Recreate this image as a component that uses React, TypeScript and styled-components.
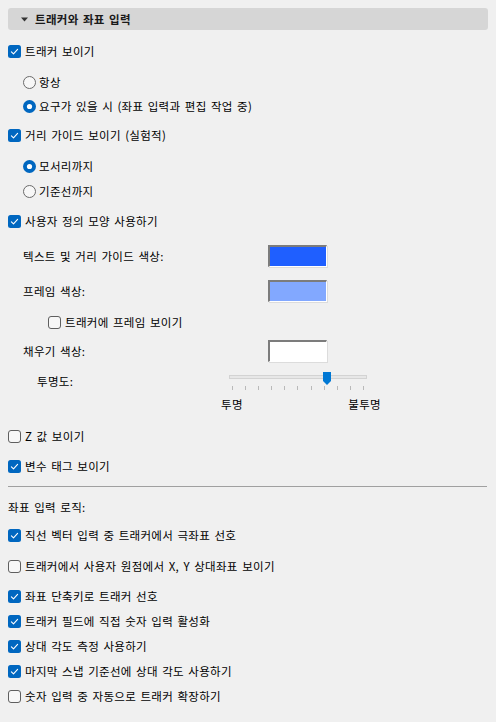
import styled, { createGlobalStyle } from "styled-components";

const GlobalStyle = createGlobalStyle`
  html, body {
    margin: 0;
    padding: 0;
    background: #f0f0f0;
  }
  body {
    font-family: "Noto Sans CJK KR", "Noto Sans", sans-serif;
    font-size: 11.5px;
    letter-spacing: 0.3px;
    word-spacing: 1.5px;
    color: #000;
  }
`;

type Item = { label: string; checked: boolean; mt: number };

const logicItems: Item[] = [
  { label: "직선 벡터 입력 중 트래커에서 극좌표 선호", checked: true, mt: 10 },
  { label: "트래커에서 사용자 원점에서 X, Y 상대좌표 보이기", checked: false, mt: 11 },
  { label: "좌표 단축키로 트래커 선호", checked: true, mt: 10 },
  { label: "트래커 필드에 직접 숫자 입력 활성화", checked: true, mt: 5 },
  { label: "상대 각도 측정 사용하기", checked: true, mt: 5 },
  { label: "마지막 스냅 기준선에 상대 각도 사용하기", checked: true, mt: 5 },
  { label: "숫자 입력 중 자동으로 트래커 확장하기", checked: false, mt: 5 },
];

const TICKS = 11;

const CheckBox = ({ checked }: { checked: boolean }) => (
  <svg width="13" height="13" viewBox="0 0 13 13">
    {checked ? (
      <>
        <rect x="0" y="0" width="13" height="13" rx="2.5" fill="#0067c0" />
        <path
          d="M3.4 6.9 L5.5 8.9 L9.6 4.4"
          fill="none"
          stroke="#fff"
          strokeWidth="1.1"
          strokeLinecap="round"
          strokeLinejoin="round"
        />
      </>
    ) : (
      <rect x="0.5" y="0.5" width="12" height="12" rx="2.5" fill="#f7f7f7" stroke="#5f5f5f" />
    )}
  </svg>
);

const Radio = ({ checked }: { checked: boolean }) => (
  <svg width="13" height="13" viewBox="0 0 13 13">
    {checked ? (
      <>
        <circle cx="6.5" cy="6.5" r="6.5" fill="#0067c0" />
        <circle cx="6.5" cy="6.5" r="2.6" fill="#fff" />
      </>
    ) : (
      <circle cx="6.5" cy="6.5" r="6" fill="#f7f7f7" stroke="#6a6a6a" />
    )}
  </svg>
);

const Check = ({ label, checked, indent = 8, mt }: { label: string; checked: boolean; indent?: number; mt: number }) => (
  <Row $indent={indent} $mt={mt}>
    <CheckBox checked={checked} />
    <Label $gap={4}>{label}</Label>
  </Row>
);

const Option = ({ label, checked, mt }: { label: string; checked: boolean; mt: number }) => (
  <Row $indent={23} $mt={mt}>
    <Radio checked={checked} />
    <Label $gap={3}>{label}</Label>
  </Row>
);

const ColorRow = ({ label, color, mt }: { label: string; color: string; mt: number }) => (
  <SwatchRow $mt={mt}>
    <FieldLabel>{label}</FieldLabel>
    <Swatch $color={color} />
  </SwatchRow>
);

export default function App() {
  const value = 0.72;
  return (
    <>
      <GlobalStyle />
      <Page>
        <Header>
          <svg width="7" height="5" viewBox="0 0 7 5">
            <path d="M0 0.5 L7 0.5 L3.5 4.5 Z" fill="#333" />
          </svg>
          <Title>트래커와 좌표 입력</Title>
        </Header>

        <Check label="트래커 보이기" checked mt={11} />
        <Option label="항상" checked={false} mt={11} />
        <Option label="요구가 있을 시 (좌표 입력과 편집 작업 중)" checked mt={4} />

        <Check label="거리 가이드 보이기 (실험적)" checked mt={9} />
        <Option label="모서리까지" checked mt={11} />
        <Option label="기준선까지" checked={false} mt={5} />

        <Check label="사용자 정의 모양 사용하기" checked mt={10} />
        <ColorRow label="텍스트 및 거리 가이드 색상:" color="#1f5fff" mt={14} />
        <ColorRow label="프레임 색상:" color="#82a8ff" mt={13} />
        <Check label="트래커에 프레임 보이기" checked={false} indent={48} mt={10} />
        <ColorRow label="채우기 색상:" color="#ffffff" mt={8} />

        <SliderBlock>
          <SliderLabel>투명도:</SliderLabel>
          <SliderArea>
            <Track>
              <Thumb style={{ left: `${3 + value * 131 - 4}px` }}>
                <svg width="8" height="13" viewBox="0 0 8 13">
                  <path d="M0 0 H8 V9 L4 13 L0 9 Z" fill="#0078d4" />
                </svg>
              </Thumb>
            </Track>
            <Ticks>
              {Array.from({ length: TICKS }, (_, i) => (
                <Tick key={i} />
              ))}
            </Ticks>
            <Ends>
              <EndLabel>투명</EndLabel>
              <EndLabel>불투명</EndLabel>
            </Ends>
          </SliderArea>
        </SliderBlock>

        <Check label="Z 값 보이기" checked={false} mt={14} />
        <Check label="변수 태그 보이기" checked mt={10} />

        <Divider />
        <SectionLabel>좌표 입력 로직:</SectionLabel>

        {logicItems.map((it) => (
          <Check key={it.label} label={it.label} checked={it.checked} mt={it.mt} />
        ))}
      </Page>
    </>
  );
}

const Page = styled.div`
  display: flex;
  flex-direction: column;
  width: 496px;
  height: 722px;
  padding-top: 8px;
  box-sizing: border-box;
  overflow: hidden;
`;

const Header = styled.div`
  display: flex;
  align-items: center;
  gap: 7px;
  margin: 0 8px;
  height: 22px;
  padding-left: 13px;
  background: #d6d6d6;
  border-radius: 3px;
`;

const Title = styled.span`
  font-weight: bold;
  font-size: 11.5px;
  color: #1a1a1a;
`;

const Row = styled.div<{ $indent: number; $mt: number }>`
  display: flex;
  align-items: center;
  height: 20px;
  margin-top: ${(p) => p.$mt}px;
  padding-left: ${(p) => p.$indent}px;
  svg {
    flex: none;
  }
`;

const Label = styled.span<{ $gap: number }>`
  margin-left: ${(p) => p.$gap}px;
  white-space: nowrap;
`;

const SwatchRow = styled.div<{ $mt: number }>`
  display: flex;
  align-items: center;
  height: 22px;
  margin-top: ${(p) => p.$mt}px;
  padding-left: 23px;
`;

const FieldLabel = styled.span`
  width: 245px;
  white-space: nowrap;
`;

const Swatch = styled.div<{ $color: string }>`
  width: 59px;
  height: 22px;
  box-sizing: border-box;
  background: ${(p) => p.$color};
  border-top: 2px solid #7c7c7c;
  border-left: 2px solid #7c7c7c;
  border-right: 1px solid #ffffff;
  border-bottom: 1px solid #ffffff;
  box-shadow: 1px 1px 0 #dcdcdc;
`;

const SliderBlock = styled.div`
  display: flex;
  align-items: flex-start;
  margin-top: 10px;
  padding-left: 37px;
`;

const SliderLabel = styled.span`
  width: 192px;
  line-height: 16px;
  margin-top: 1px;
`;

const SliderArea = styled.div`
  display: flex;
  flex-direction: column;
  width: 138px;
`;

const Track = styled.div`
  position: relative;
  margin-top: 3px;
  height: 4px;
  background: #e7e7e7;
  border: 1px solid #d3d3d3;
  box-sizing: border-box;
`;

const Thumb = styled.div`
  position: absolute;
  top: -4px;
  display: flex;
`;

const Ticks = styled.div`
  display: flex;
  justify-content: space-between;
  padding: 0 3px;
  margin-top: 7px;
`;

const Tick = styled.div`
  width: 1px;
  height: 4px;
  background: #b9b9b9;
`;

const Ends = styled.div`
  display: flex;
  justify-content: space-between;
  margin: 6px -14px 0 -8px;
  line-height: 16px;
`;

const EndLabel = styled.span`
  white-space: nowrap;
`;

const Divider = styled.div`
  height: 1px;
  margin: 10px 9px 0 8px;
  background: #a0a0a0;
`;

const SectionLabel = styled.div`
  margin-top: 12px;
  padding-left: 8px;
  line-height: 16px;
`;
